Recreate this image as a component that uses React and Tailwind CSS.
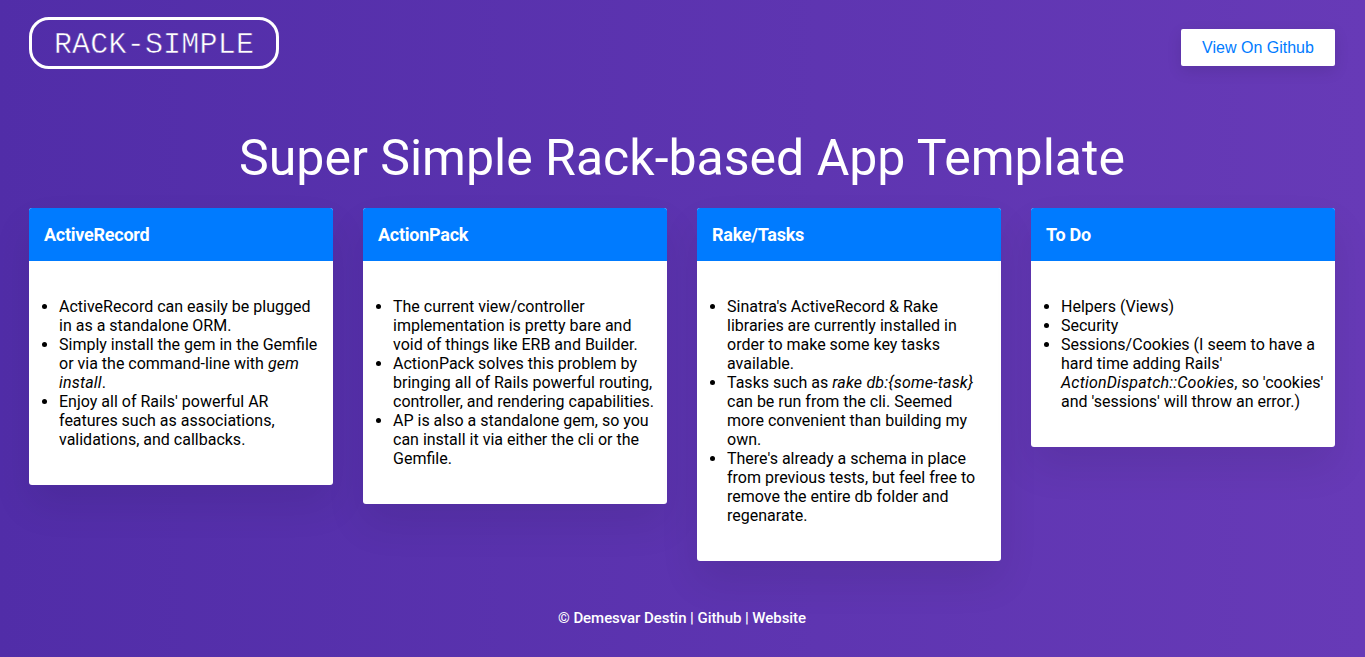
import React from "react";

const cards = [
  {
    title: "ActiveRecord",
    items: [
      <>ActiveRecord can easily be plugged in as a standalone ORM.</>,
      <>Simply install the gem in the Gemfile or via the command-line with <em className="tracking-[0.2px]">gem install</em>.</>,
      <>Enjoy all of Rails' powerful AR features such as associations, validations, and callbacks.</>,
    ],
  },
  {
    title: "ActionPack",
    items: [
      <>The current view/controller implementation is pretty bare and void of things like ERB and Builder.</>,
      <>ActionPack solves this problem by bringing all of Rails powerful routing, controller, and rendering capabilities.</>,
      <>AP is also a standalone gem, so you can install it via either the cli or the Gemfile.</>,
    ],
  },
  {
    title: "Rake/Tasks",
    items: [
      <>Sinatra's ActiveRecord &amp; Rake libraries are currently installed in order to make some key tasks available.</>,
      <>Tasks such as <em className="tracking-[0.2px]">rake db:{"{some-task}"}</em> can be run from the cli. Seemed more convenient than building my own.</>,
      <>There's already a schema in place from previous tests, but feel free to remove the entire db folder and regenarate.</>,
    ],
  },
  {
    title: "To Do",
    items: [
      <>Helpers (Views)</>,
      <>Security</>,
      <>Sessions/Cookies (I seem to have a hard time adding Rails' <em className="tracking-[0.2px]">ActionDispatch::Cookies</em>, so 'cookies' and 'sessions' will throw an error.)</>,
    ],
  },
];

function Card({ title, items }) {
  return (
    <div className="rounded-[3px] bg-white overflow-hidden shadow-[0_20px_40px_rgba(0,0,0,0.08)]">
      <div className="h-[53px] px-[15px] pb-[1px] flex items-center bg-[#007bff] text-white text-[18px] font-bold tracking-[-0.25px]">
        {title}
      </div>
      <div className="pl-[15px] pr-[8px] pt-9 pb-9">
        <ul className="list-disc pl-[15px] text-black">
          {items.map((item, i) => (
            <li key={i}>{item}</li>
          ))}
        </ul>
      </div>
    </div>
  );
}

export default function App() {
  return (
    <div className="min-h-screen pl-[29px] pr-[30px] pt-[17px] text-[16px] leading-[19px] bg-gradient-to-r from-[#512da8] to-[#673ab7] font-['Roboto',sans-serif]">
      <header className="flex items-start justify-between">
        <div className="h-[52px] w-[250px] pt-[5px] flex items-center justify-center rounded-[20px] border-[3px] border-white text-white text-[30px] font-['Liberation_Mono',monospace] tracking-[0.2px] [-webkit-text-stroke:0.5px_#532fa5]">
          RACK-SIMPLE
        </div>
        <a className="mt-3 h-[37px] w-[154px] flex items-center justify-center rounded-[2px] bg-white text-[#007bff] font-['Liberation_Sans',sans-serif] shadow-[0_5px_15px_rgba(0,0,0,0.1)]">
          View On Github
        </a>
      </header>

      <h1 className="mt-[61px] mb-[22px] text-center text-white text-[50px] leading-[56px]">
        Super Simple Rack-based App Template
      </h1>

      <main className="grid grid-cols-4 gap-[30px] items-start">
        {cards.map((card) => (
          <Card key={card.title} title={card.title} items={card.items} />
        ))}
      </main>

      <footer className="mt-[48px] text-center text-white text-[15px] leading-[19px] font-medium tracking-[-0.05px]">
        © Demesvar Destin | Github | Website
      </footer>
    </div>
  );
}
